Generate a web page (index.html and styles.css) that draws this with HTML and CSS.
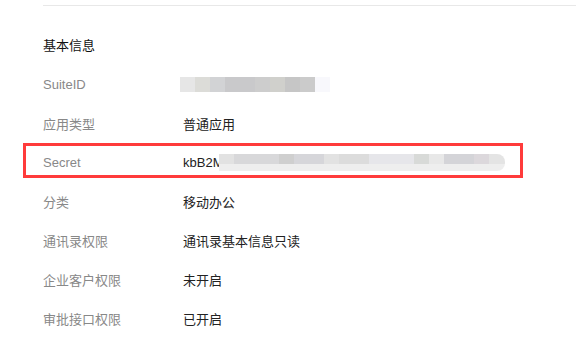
FILE: index.html
```html
<!DOCTYPE html>
<html lang="zh-CN">
<head>
    <meta charset="UTF-8">
    <meta name="viewport" content="width=device-width, initial-scale=1.0">
    <title>基本信息</title>
    <link rel="stylesheet" href="styles.css">
</head>
<body>
    <div class="panel">
        <div class="divider"></div>
        <h2 class="title">基本信息</h2>
        <div class="info-list">
            <div class="row">
                <span class="label">SuiteID</span>
                <span class="value"><span class="blur blur-id"></span></span>
            </div>
            <div class="row">
                <span class="label">应用类型</span>
                <span class="value">普通应用</span>
            </div>
            <div class="row highlight">
                <span class="label">Secret</span>
                <span class="value">kbB2M<span class="blur blur-secret"></span></span>
            </div>
            <div class="row">
                <span class="label">分类</span>
                <span class="value">移动办公</span>
            </div>
            <div class="row">
                <span class="label">通讯录权限</span>
                <span class="value">通讯录基本信息只读</span>
            </div>
            <div class="row">
                <span class="label">企业客户权限</span>
                <span class="value">未开启</span>
            </div>
            <div class="row">
                <span class="label">审批接口权限</span>
                <span class="value">已开启</span>
            </div>
        </div>
    </div>
</body>
</html>
```

FILE: styles.css
```css
body {
    margin: 0;
    background-color: #fff;
    font-family: "Liberation Sans", "Noto Sans CJK SC", sans-serif;
    font-size: 13px;
    color: #222;
}

.panel {
    padding-left: 43px;
    padding-top: 5px;
}

.divider {
    height: 1px;
    background-color: #e8e8e8;
}

.title {
    margin: 20px 0 0;
    height: 39px;
    line-height: 39px;
    font-size: 13px;
    font-weight: normal;
    color: #111;
}

.row {
    position: relative;
    display: flex;
    align-items: center;
    height: 39px;
}

.label {
    width: 140px;
    flex-shrink: 0;
    color: #888;
}

.value {
    display: flex;
    align-items: center;
    color: #222;
}

/* red annotation box around the Secret row */
.highlight::after {
    content: "";
    position: absolute;
    left: -20px;
    top: 0;
    width: 494px;
    height: 29px;
    border: 3px solid #ff3b3b;
}

.blur {
    display: inline-block;
}

.blur-id {
    margin-left: -3px;
    width: 150px;
    height: 15px;
    background: linear-gradient(to right,
        #e6e6e6 0, #e6e6e6 15px,
        #dcdcd8 15px, #dcdcd8 30px,
        #d2d3d5 30px, #d2d3d5 45px,
        #c9c9cb 45px, #c9c9cb 75px,
        #cdcdcd 75px, #cdcdcd 90px,
        #d0d0cc 90px, #d0d0cc 105px,
        #c6c6c6 105px, #c6c6c6 120px,
        #cbcbcb 120px, #cbcbcb 135px,
        #f8f8fc 135px, #f8f8fc 150px);
}

.blur-secret {
    margin-left: -4px;
    width: 286px;
    height: 17px;
    border-radius: 0 8px 8px 0;
    background:
        linear-gradient(to bottom, transparent 0, transparent 10px, #eeeeee 10px),
        linear-gradient(to right,
            #e2e2e2 0, #e2e2e2 15px,
            #d8d8da 15px, #d8d8da 60px,
            #cfcfcf 60px, #cfcfcf 75px,
            #d6d6da 75px, #d6d6da 105px,
            #e2e2e2 105px, #e2e2e2 120px,
            #dcdcdc 120px, #dcdcdc 150px,
            #e6e6ea 150px, #e6e6ea 195px,
            #d8dad8 195px, #d8dad8 210px,
            #e8e8e8 210px, #e8e8e8 225px,
            #d4d4d8 225px, #d4d4d8 255px,
            #dcd8dc 255px, #dcd8dc 270px,
            #e4e4e4 270px);
}
```
